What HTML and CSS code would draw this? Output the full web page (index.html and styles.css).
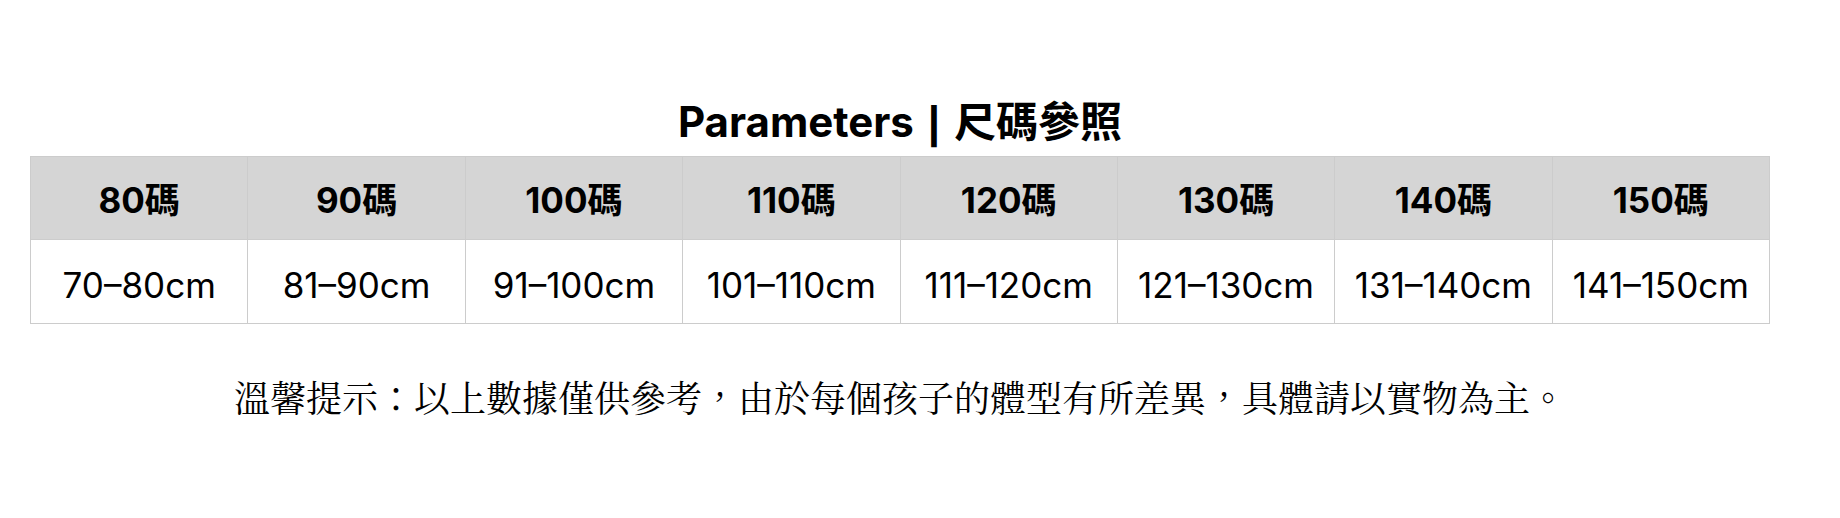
FILE: index.html
```html
<!DOCTYPE html>
<html lang="zh-Hant">
<head>
<meta charset="utf-8">
<title>Parameters | 尺碼參照</title>
<link rel="stylesheet" href="styles.css">
</head>
<body>
<main class="page">
  <h1 class="title">Parameters <span class="bar">|</span> 尺碼參照</h1>
  <table class="size-table">
    <thead>
      <tr>
        <th>80碼</th>
        <th>90碼</th>
        <th>100碼</th>
        <th>110碼</th>
        <th>120碼</th>
        <th>130碼</th>
        <th>140碼</th>
        <th>150碼</th>
      </tr>
    </thead>
    <tbody>
      <tr>
        <td>70–80cm</td>
        <td>81–90cm</td>
        <td>91–100cm</td>
        <td>101–110cm</td>
        <td>111–120cm</td>
        <td>121–130cm</td>
        <td>131–140cm</td>
        <td>141–150cm</td>
      </tr>
    </tbody>
  </table>
  <p class="note">溫馨提示：以上數據僅供參考，由於每個孩子的體型有所差異，具體請以實物為主。</p>
</main>
</body>
</html>
```

FILE: styles.css
```css
html, body {
  margin: 0;
  padding: 0;
  background: #ffffff;
}

.page {
  width: 1740px;
  margin: 0 0 0 30px;
  padding-top: 97px;
  color: #000000;
  font-family: Inter, "Noto Sans CJK TC", sans-serif;
}

.title {
  margin: 0 0 9px 0;
  font-size: 42px;
  line-height: 50px;
  font-weight: 700;
  text-align: center;
}

.title .bar {
  font-family: "Liberation Sans", sans-serif;
  font-weight: 700;
  font-size: 44px;
  margin: 0 4px;
}

.size-table {
  width: 1740px;
  table-layout: fixed;
  border-collapse: collapse;
}

.size-table th,
.size-table td {
  border: 1px solid #cccccc;
  text-align: center;
  font-size: 35px;
  line-height: 40px;
  padding: 0;
}

.size-table th {
  background: #d5d5d5;
  font-weight: 700;
  padding-top: 23px;
  padding-bottom: 19px;
}

.size-table td {
  background: #ffffff;
  font-weight: 400;
  padding-top: 25px;
  padding-bottom: 18px;
}

.note {
  margin: 56px 0 0 0;
  font-family: "Liberation Serif", "Noto Serif CJK TC", "Noto Sans CJK TC", serif;
  font-size: 36px;
  line-height: 40px;
  text-align: center;
}
```
